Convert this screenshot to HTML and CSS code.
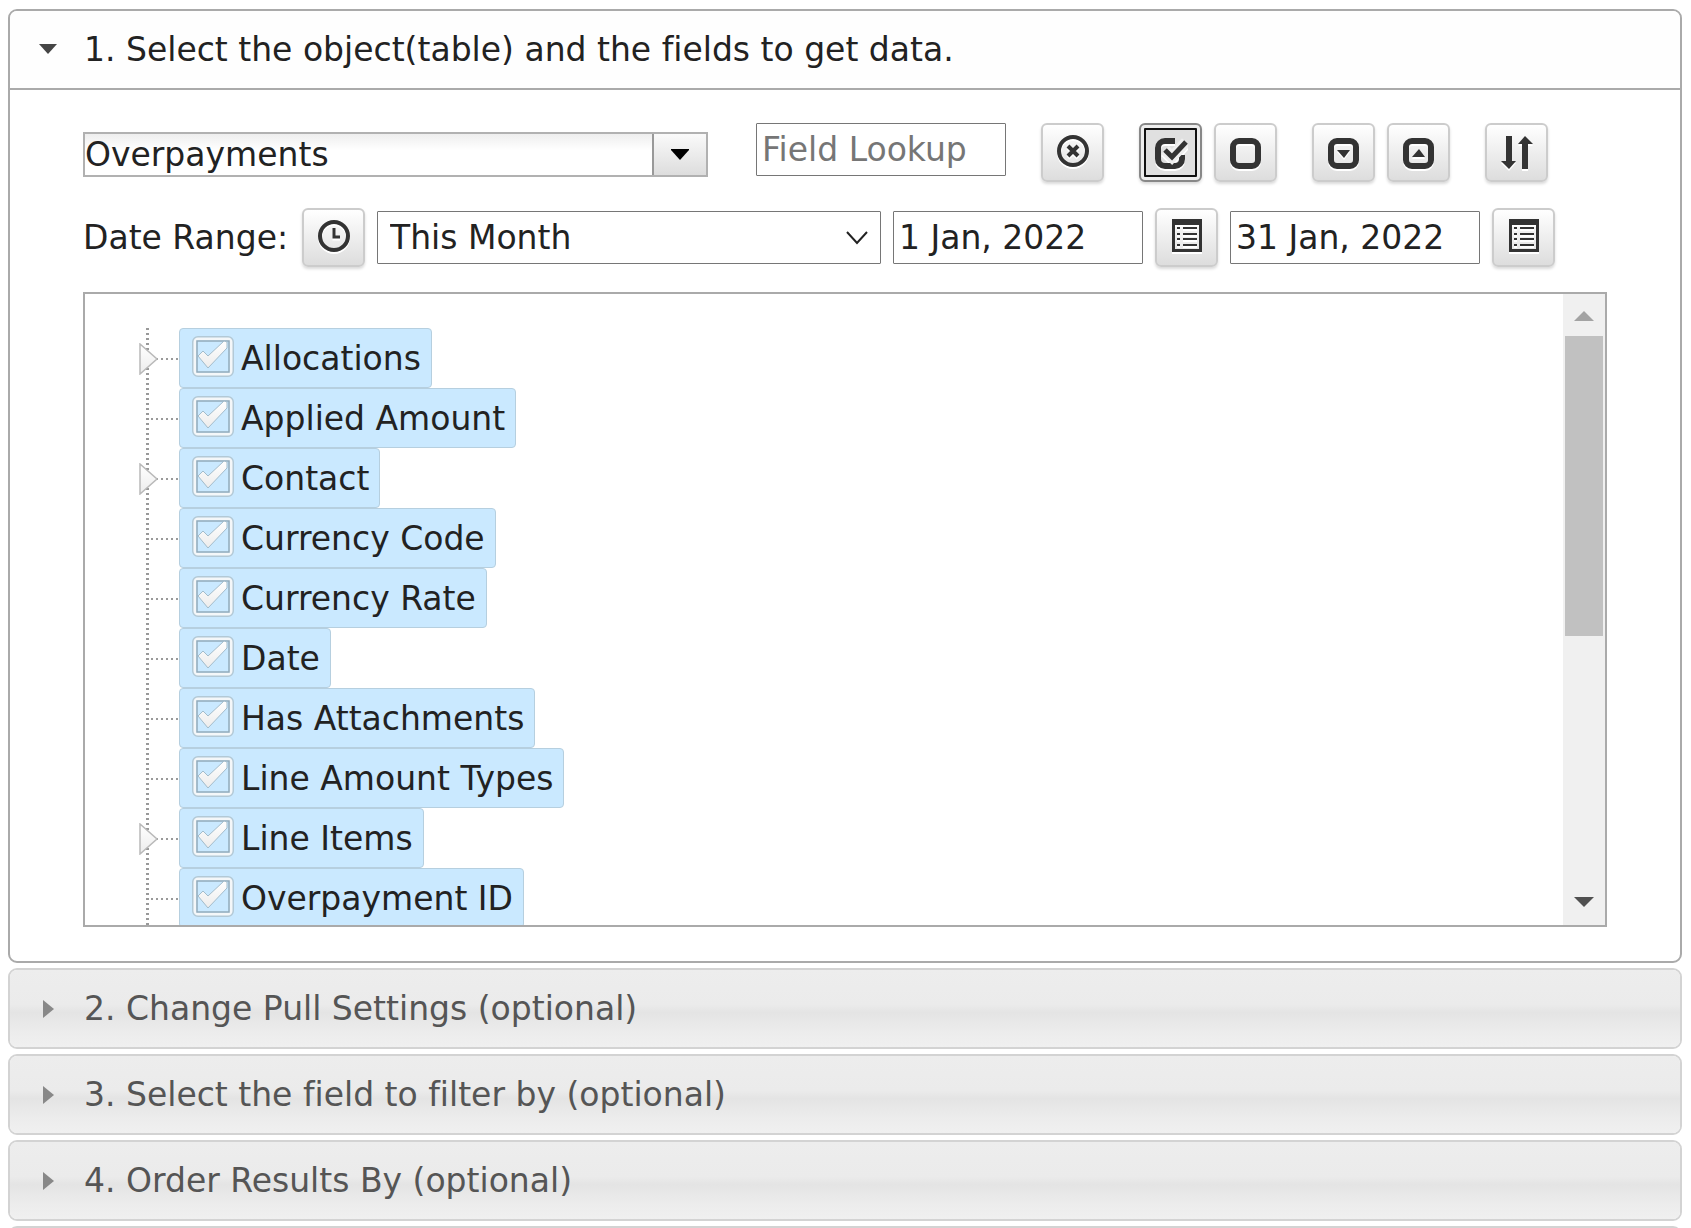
FILE: index.html
```html
<!DOCTYPE html>
<html lang="en">
<head>
    <meta charset="UTF-8">
    <meta name="viewport" content="width=device-width, initial-scale=1.0">
    <title>Get Data</title>
    <link rel="stylesheet" href="styles.css">
</head>
<body>
    <svg class="defs" aria-hidden="true">
        <linearGradient id="silver" x1="0" y1="0" x2="0" y2="1">
            <stop offset="0" stop-color="#ffffff"/>
            <stop offset="1" stop-color="#ececec"/>
        </linearGradient>
        <symbol id="icon-list" viewBox="0 0 30 33">
            <path fill="#333" fill-rule="evenodd" d="M0 0h30v33H0zM3 6v24h24V6z"/>
            <path fill="#333" d="M5 8h3v2H5zM11 8h14v2H11zM5 14h3v2H5zM11 14h14v2H11zM5 19h3v2H5zM11 19h14v2H11zM5 25h3v2H5zM11 25h14v2H11z"/>
        </symbol>
        <symbol id="icon-tick" viewBox="0 0 44 42">
            <rect x="3" y="2" width="38" height="37" rx="4" fill="none" stroke="#b3c9d6" stroke-width="4"/>
            <rect x="4" y="3" width="36" height="35" rx="3" fill="none" stroke="#f4f7f9" stroke-width="3"/>
            <rect x="6" y="5" width="32" height="31" fill="none" stroke="#92abbb" stroke-width="1.5"/>
            <path d="M7 20l5-5 5 5L33 5l3 1v6L17 32z" fill="url(#silver)" stroke="#a3bccb" stroke-width="1"/>
        </symbol>
        <symbol id="icon-expand" viewBox="0 0 22 32">
            <path d="M2 1v30l17-15z" fill="url(#silver)" stroke="#b9b9b9" stroke-width="1.5"/>
        </symbol>
    </svg>

    <main class="accordion">
        <section class="section open">
            <button class="section-title" aria-expanded="true">
                <svg class="arrow" viewBox="0 0 20 20"><path d="M1 4h18l-9 10z"/></svg>
                1. Select the object(table) and the fields to get data.
            </button>

            <div class="panel">
                <div class="row">
                    <div class="combo">
                        <input type="text" value="Overpayments" aria-label="Object">
                        <button aria-label="Show objects">
                            <svg width="18" height="12" viewBox="0 0 18 12"><path d="M0 0h18v1L9 11 0 1z"/></svg>
                        </button>
                    </div>
                    <input class="field lookup" type="text" placeholder="Field Lookup" aria-label="Field Lookup">
                    <div class="buttons">
                        <button class="btn raised" aria-label="Clear lookup">
                            <svg width="32" height="32" viewBox="0 0 32 32"><circle cx="16" cy="16" r="14" class="line"/><path class="line" d="M11 11l10 10M21 11l-10 10"/></svg>
                        </button>
                    </div>
                    <div class="buttons">
                        <button class="btn focused" aria-label="Select all">
                            <svg width="34" height="32" viewBox="0 0 34 32"><path class="box" d="M21 4H11a7 7 0 0 0-7 7v11a7 7 0 0 0 7 7h10a7 7 0 0 0 7-7v-4"/><path class="halo" d="M11 13l7 7L32 5"/><path class="tick" d="M11 13l7 7L32 5"/></svg>
                        </button>
                        <button class="btn" aria-label="Select none">
                            <svg width="32" height="32" viewBox="0 0 32 32"><rect class="box" x="3" y="4" width="25" height="25" rx="6"/></svg>
                        </button>
                    </div>
                    <div class="buttons">
                        <button class="btn" aria-label="Expand all">
                            <svg width="32" height="32" viewBox="0 0 32 32"><rect class="box" x="3" y="4" width="25" height="25" rx="6"/><path d="M9 13h13l-6 8z"/></svg>
                        </button>
                        <button class="btn" aria-label="Collapse all">
                            <svg width="32" height="32" viewBox="0 0 32 32"><rect class="box" x="3" y="4" width="25" height="25" rx="6"/><path d="M9 20h13l-6-8z"/></svg>
                        </button>
                    </div>
                    <div class="buttons">
                        <button class="btn" aria-label="Sort">
                            <svg width="32" height="34" viewBox="0 0 32 34"><path d="M5 0h6v25h4l-7 8-8-8h5zM21 33V8h-4l7-8 8 8h-5v25z"/></svg>
                        </button>
                    </div>
                </div>

                <div class="row range">
                    <label for="range">Date Range:</label>
                    <button class="btn raised" aria-label="Set time">
                        <svg width="32" height="32" viewBox="0 0 32 32"><circle cx="16" cy="16" r="14" class="line"/><path class="hand" d="M16 8v9h6"/></svg>
                    </button>
                    <div class="select">
                        <select id="range" class="field">
                            <option>This Month</option>
                        </select>
                        <svg width="22" height="14" viewBox="0 0 22 14"><path d="M1 1l10 11L21 1"/></svg>
                    </div>
                    <input class="field" type="text" value="1 Jan, 2022" aria-label="From">
                    <button class="btn raised" aria-label="Pick start date"><svg width="30" height="33"><use href="#icon-list"/></svg></button>
                    <input class="field" type="text" value="31 Jan, 2022" aria-label="To">
                    <button class="btn raised" aria-label="Pick end date"><svg width="30" height="33"><use href="#icon-list"/></svg></button>
                </div>

                <div class="tree-box">
                    <ul class="tree">
                        <li class="parent"><svg class="expander"><use href="#icon-expand"/></svg><a href="#"><svg class="check"><use href="#icon-tick"/></svg>Allocations</a></li>
                        <li><a href="#"><svg class="check"><use href="#icon-tick"/></svg>Applied Amount</a></li>
                        <li class="parent"><svg class="expander"><use href="#icon-expand"/></svg><a href="#"><svg class="check"><use href="#icon-tick"/></svg>Contact</a></li>
                        <li><a href="#"><svg class="check"><use href="#icon-tick"/></svg>Currency Code</a></li>
                        <li><a href="#"><svg class="check"><use href="#icon-tick"/></svg>Currency Rate</a></li>
                        <li><a href="#"><svg class="check"><use href="#icon-tick"/></svg>Date</a></li>
                        <li><a href="#"><svg class="check"><use href="#icon-tick"/></svg>Has Attachments</a></li>
                        <li><a href="#"><svg class="check"><use href="#icon-tick"/></svg>Line Amount Types</a></li>
                        <li class="parent"><svg class="expander"><use href="#icon-expand"/></svg><a href="#"><svg class="check"><use href="#icon-tick"/></svg>Line Items</a></li>
                        <li><a href="#"><svg class="check"><use href="#icon-tick"/></svg>Overpayment ID</a></li>
                    </ul>
                    <div class="scrollbar">
                        <svg class="up" width="20" height="10" viewBox="0 0 20 10"><path d="M0 10h20L10 0z"/></svg>
                        <div class="thumb"></div>
                        <svg class="down" width="20" height="10" viewBox="0 0 20 10"><path d="M0 0h20L10 10z"/></svg>
                    </div>
                </div>
            </div>
        </section>

        <section class="section">
            <button class="section-title"><svg class="arrow" viewBox="0 0 20 20"><path d="M5 1v18l11-9z"/></svg>2. Change Pull Settings (optional)</button>
        </section>
        <section class="section">
            <button class="section-title"><svg class="arrow" viewBox="0 0 20 20"><path d="M5 1v18l11-9z"/></svg>3. Select the field to filter by (optional)</button>
        </section>
        <section class="section">
            <button class="section-title"><svg class="arrow" viewBox="0 0 20 20"><path d="M5 1v18l11-9z"/></svg>4. Order Results By (optional)</button>
        </section>
        <section class="section">
            <button class="section-title" aria-label="Next step"></button>
        </section>
    </main>
</body>
</html>
```
FILE: styles.css
```css
/* General Styling */
* {
    margin: 0;
    padding: 0;
    box-sizing: border-box;
}

html {
    scrollbar-width: none;
}

body {
    background: white;
    color: #222;
    font-family: Verdana, 'DejaVu Sans', sans-serif;
    font-size: 33px;
    line-height: 40px;
    font-variant-ligatures: none;
}

button, input, select {
    font: inherit;
    font-variant-ligatures: none;
    color: inherit;
}

.defs {
    position: absolute;
    width: 0;
    height: 0;
}

/* Accordion */
.accordion {
    display: flex;
    flex-direction: column;
    gap: 5px;
    padding: 9px 9px 9px 8px;
}

.section {
    border: 2px solid #d3d3d3;
    border-radius: 9px;
    overflow: hidden;
}

.section-title {
    display: flex;
    align-items: center;
    gap: 26px;
    width: 100%;
    height: 77px;
    padding: 0 28px;
    border: none;
    text-align: left;
    color: #555;
    background: linear-gradient(#ededed 0%, #ebebeb 45%, #e4e4e4 55%, #ececec 80%, #f0f0f0 100%);
    cursor: pointer;
}

.arrow {
    width: 20px;
    height: 20px;
    fill: #888;
}

.open {
    border-color: #aaa;
}

.open .section-title {
    height: 79px;
    border-bottom: 2px solid #aaa;
    background: #fefefe;
    color: #222;
}

.open .arrow {
    fill: #454545;
}

.panel {
    padding: 33px 73px 34px;
}

/* Toolbar rows */
.row {
    display: flex;
    align-items: flex-start;
    margin-bottom: 26px;
}

.combo {
    display: flex;
    width: 625px;
    height: 45px;
    margin: 9px 48px 0 0;
    border: 2px solid #b1b1b1;
}

.combo input {
    flex: 1;
    min-width: 0;
    border: none;
    background: linear-gradient(#eee, #fff 40%);
}

.combo button {
    display: flex;
    align-items: center;
    justify-content: center;
    width: 54px;
    border: none;
    border-left: 2px solid #999;
    background: linear-gradient(#fafafa, #ddd);
}

.field {
    width: 250px;
    height: 53px;
    padding: 0 5px;
    border: 1px solid #767676;
    border-radius: 1px;
    background: white;
}

.field::placeholder {
    color: #767676;
}

.lookup {
    margin-right: 35px;
}

.buttons {
    display: flex;
    gap: 12px;
    margin-right: 35px;
}

.btn {
    display: flex;
    align-items: center;
    justify-content: center;
    width: 63px;
    height: 59px;
    border: 2px solid #ccc;
    border-radius: 6px;
    background: linear-gradient(#fff, #ddd);
    box-shadow: 0 2px 3px rgba(0, 0, 0, 0.15);
    cursor: pointer;
}

.raised {
    padding-bottom: 4px;
}

.btn svg {
    fill: #333;
    filter: drop-shadow(0 2px 0 white);
}

.btn .line, .btn .box, .btn .tick, .btn .hand, .btn .halo {
    fill: none;
    stroke: #333;
    stroke-width: 4;
}

.btn .box {
    stroke-width: 6;
}

.btn .tick {
    stroke-width: 5;
}

.btn .halo {
    stroke: #eee;
    stroke-width: 11;
}

.btn .hand {
    stroke-width: 3;
}

.focused {
    border-color: #888;
    background: #e0e0e0;
    outline: 2px solid #111;
    outline-offset: -7px;
    box-shadow: inset 0 0 0 3px #eee, 0 2px 3px rgba(0, 0, 0, 0.15);
}

.range {
    align-items: center;
    gap: 12px;
    margin-bottom: 25px;
}

.range label {
    min-width: 207px;
}

.select {
    position: relative;
}

.select select {
    width: 504px;
    padding-left: 12px;
    appearance: none;
}

.select svg {
    position: absolute;
    right: 13px;
    top: 20px;
    fill: none;
    stroke: #222;
    stroke-width: 2;
    pointer-events: none;
}

/* Field tree */
.tree-box {
    display: flex;
    height: 635px;
    border: 2px solid #aaa;
}

.tree {
    flex: 1;
    padding: 34px 0 0 61px;
    list-style: none;
    overflow: auto;
    scrollbar-width: none;
}

.tree li {
    position: relative;
    height: 60px;
    padding-left: 33px;
    background:
        repeating-linear-gradient(#999 0 2px, transparent 2px 5px) 0 0 / 3px 60px no-repeat,
        repeating-linear-gradient(90deg, #999 0 2px, transparent 2px 5px) 0 30px / 33px 2px no-repeat;
}

.tree a {
    display: inline-flex;
    align-items: center;
    height: 60px;
    padding: 2px 10px 0 11px;
    border: 1px solid #b6cfdf;
    border-radius: 4px;
    background: #cae9ff;
    color: #222;
    text-decoration: none;
}

.check {
    width: 44px;
    height: 42px;
    margin: 0 6px 5px 0;
}

.expander {
    position: absolute;
    left: -8px;
    top: 15px;
    width: 22px;
    height: 32px;
}

/* Scrollbar */
.scrollbar {
    display: flex;
    flex-direction: column;
    align-items: center;
    width: 42px;
    padding: 17px 0 18px;
    background: #f0f0f0;
}

.thumb {
    width: 38px;
    height: 300px;
    margin-top: 15px;
    background: #c1c1c1;
}

.up {
    fill: #a3a3a3;
}

.down {
    margin-top: auto;
    fill: #505050;
}
```
